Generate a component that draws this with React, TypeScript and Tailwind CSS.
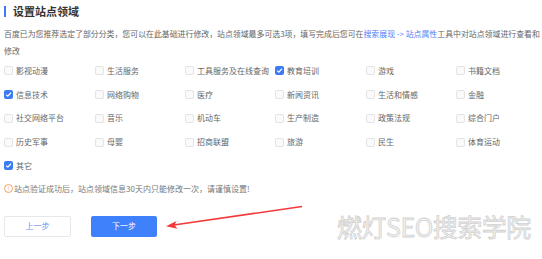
import React from "react";

const rows: { label: string; checked?: boolean }[][] = [
  [
    { label: "影视动漫" },
    { label: "生活服务" },
    { label: "工具服务及在线查询" },
    { label: "教育培训", checked: true },
    { label: "游戏" },
    { label: "书籍文档" },
  ],
  [
    { label: "信息技术", checked: true },
    { label: "网络购物" },
    { label: "医疗" },
    { label: "新闻资讯" },
    { label: "生活和情感" },
    { label: "金融" },
  ],
  [
    { label: "社交网络平台" },
    { label: "音乐" },
    { label: "机动车" },
    { label: "生产制造" },
    { label: "政策法规" },
    { label: "综合门户" },
  ],
  [
    { label: "历史军事" },
    { label: "母婴" },
    { label: "招商联盟" },
    { label: "旅游" },
    { label: "民生" },
    { label: "体育运动" },
  ],
  [{ label: "其它", checked: true }],
];

function Box({ checked }: { checked?: boolean }) {
  if (checked) {
    return (
      <span className="flex h-[9px] w-[9px] items-center justify-center rounded-[2px] bg-[#3b7cf6]">
        <svg width="7" height="7" viewBox="0 0 8 8">
          <path d="M1.3 4.2 L3.2 6 L6.8 2" fill="none" stroke="#fff" strokeWidth="1.3" />
        </svg>
      </span>
    );
  }
  return <span className="block h-[9px] w-[9px] rounded-[2px] border border-[#e2e4e8] bg-[#fafafa]" />;
}

export default function App() {
  return (
    <div
      className="relative h-[259px] w-[542px] overflow-hidden bg-white pl-[4px]"
      style={{ fontFamily: '"Noto Sans CJK SC", "Noto Sans", sans-serif' }}
    >
      <div className="flex h-[22px] items-center gap-[7px]">
        <span className="block h-[11px] w-[2px] bg-[#3b7cf6]" />
        <span className="text-[11px] font-bold leading-none text-[#333]">设置站点领域</span>
      </div>
      <div className="mt-[3px] whitespace-nowrap text-[7.9px] leading-[17px] text-[#666]">
        百度已为您推荐选定了部分分类，您可以在此基础进行修改，站点领域最多可选3项，填写完成后您可在
        <span className="text-[#4d7ff7]">搜索展现 -&gt; 站点属性</span>
        工具中对站点领域进行查看和
        <br />
        修改
      </div>
      <div className="grid grid-cols-[91px_90px_90px_91px_90px_90px] auto-rows-[23.75px]">
        {rows.flat().map((it, i) => (
          <div key={i} className="flex items-center gap-[3px]">
            <Box checked={it.checked} />
            <span className="text-[8px] leading-none text-[#666]">{it.label}</span>
          </div>
        ))}
      </div>
      <div className="mt-[3px] flex h-[16px] items-center gap-[1px] text-[8px] text-[#777]">
        <span className="flex h-[9px] w-[9px] items-center justify-center rounded-full border border-[#f0a060] text-[6px] leading-none text-[#f0a060]">
          !
        </span>
        <span>站点验证成功后，站点领域信息30天内只能修改一次，请谨慎设置!</span>
      </div>
      <div className="mt-[19px] flex gap-[20px]">
        <button className="flex h-[21px] w-[67px] items-center justify-center rounded-[2px] border border-[#e6e8ec] bg-white text-[8px] text-[#6b93f5]">
          上一步
        </button>
        <button className="flex h-[21px] w-[66px] items-center justify-center rounded-[2px] bg-[#3f80fb] text-[8px] text-white">
          下一步
        </button>
      </div>

      <svg className="absolute left-0 top-0" width="542" height="259" viewBox="0 0 542 259">
        <line x1="302" y1="206.5" x2="172" y2="225.3" stroke="#f23a3a" strokeWidth="1.6" />
        <path d="M166 226.2 L176.5 221 L174.5 225 L177.5 228.8 Z" fill="#f23a3a" />
      </svg>

      <div
        className="absolute left-[337px] top-[214px] whitespace-nowrap text-[25px] leading-none tracking-[-0.5px] text-[#f4f4f4] [-webkit-text-stroke:0.8px_#d2d2d2]"
      >
        燃灯SEO搜索学院
      </div>
    </div>
  );
}
